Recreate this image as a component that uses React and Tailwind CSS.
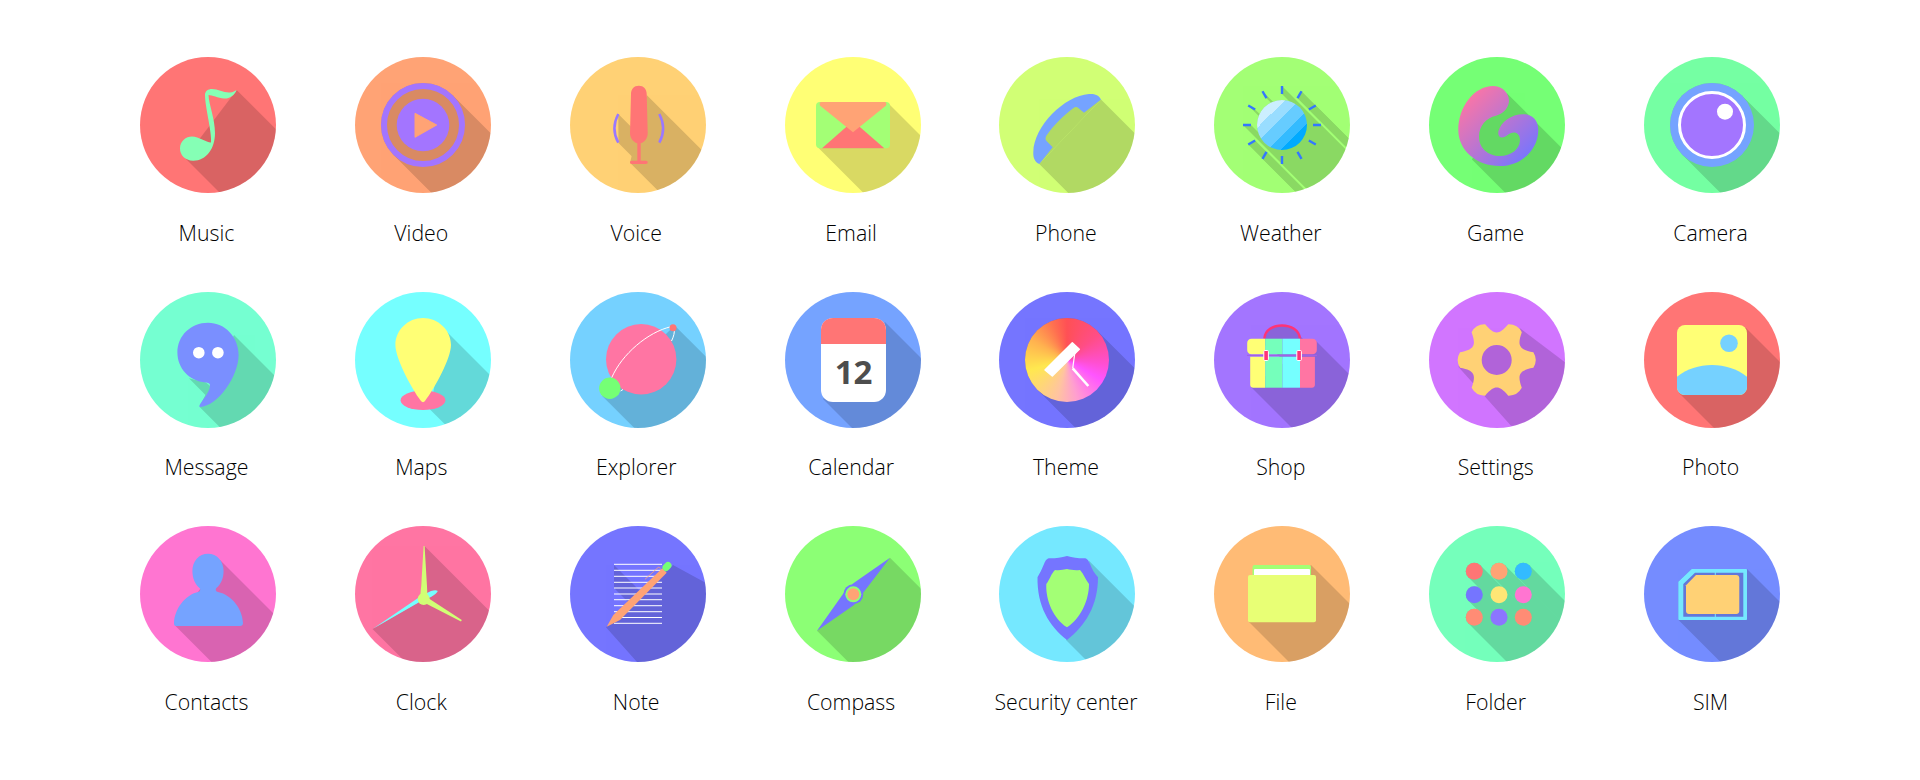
// Flat long-shadow app icon sheet
const Shade = ({ children }) => <g fill="#000" opacity="0.15">{children}</g>;

// long shadow running down-right from the edge between two points
const Band = ({ p }) => (
  <path d={`M${p[0]} ${p[1]}L${p[0] + 200} ${p[1] + 200}L${p[2] + 200} ${p[3] + 200}L${p[2]} ${p[3]}Z`} />
);

// same thing for a round shape, disc included
const RoundShade = ({ cx = 68, cy = 68, r }) => {
  const d = r * 0.7071;
  return (
    <>
      <circle cx={cx} cy={cy} r={r} />
      <Band p={[cx + d, cy - d, cx - d, cy + d]} />
    </>
  );
};

const Music = () => (
  <>
    <Shade><Band p={[96.7, 33, 45, 101]} /></Shade>
    <path fill="#85ffb5" d="M65 38C65 34 68 32 72 32C78 32 84 36 90 35.5C93 35.3 95 34 96.7 33C94 39 89 42 84 41.5C78 41 72 38 68.5 38C69 48 75 62 75 76C75 92 66 104 53 103.7C45 103.5 40 98 40 91.5C40 84 46 79.5 52 79.5C59 79.5 66 85.5 71 85.5C72 75 65 50 65 38Z" />
  </>
);

const Video = () => (
  <>
    <Shade><RoundShade r={42} /></Shade>
    <circle cx="68" cy="68" r="39" fill="none" stroke="#a375ff" strokeWidth="6" />
    <circle cx="68" cy="68" r="26.3" fill="#a375ff" />
    <path d="M60 56.3L81.7 68L60 80.3Z" fill="#ffa375" stroke="#ffa375" strokeLinejoin="round" />
  </>
);

const Voice = () => (
  <>
    <Shade>
      <Band p={[76.7, 38, 60, 105.7]} />
      <Band p={[48.3, 57, 48.5, 86]} />
    </Shade>
    <path fill="#ff7575" d="M61 37C61 32 64 28.7 68.8 28.7C73.5 28.7 76.7 32 76.7 37L77.7 76C77.7 81 75 85 70.7 86.3V103.7H76C77 103.7 77.7 104.5 77.7 105.3C77.7 106.2 77 107 76 107H61.7C60.7 107 60 106.2 60 105.3C60 104.5 60.7 103.7 61.7 103.7H67.3V86.3C63 85 60 81 60 76Z" />
    <path d="M48.3 57Q40.5 71.5 48.3 85.7M89.3 57Q97 71.5 89.3 85.7" fill="none" stroke="#9a78ff" strokeWidth="2.5" />
  </>
);

const Email = () => (
  <>
    <Shade><Band p={[103, 46, 33, 90.5]} /></Shade>
    <rect x="31" y="45" width="74" height="46.3" rx="4" fill="#a3ff75" />
    <path d="M37 91.3H99.3L68 64Z" fill="#ff7575" />
    <path d="M36.5 45H99.5C101.5 45 102 47.5 100.5 49L68 75.3L35.5 49C34 47.5 34.5 45 36.5 45Z" fill="#ffa375" />
  </>
);

const Phone = () => (
  <>
    <Shade>
      <Band p={[102, 42.5, 40.3, 107]} />
      <path d="M102 42.5L74 45L42 78L40.3 107Z" />
    </Shade>
    <path fill="#75a3ff" d="M102 42.5C100 38 95 36.5 90 37C65 39 35 69 34.3 95C34 101 36 105 40.3 107L53.7 90.3L47.5 84C46 82.5 46.5 80 47.5 78.5C54.5 68.5 64 59 74.5 51C76 49.8 78 49.8 79 50.8L85 55.7Z" />
  </>
);

const rayAngles = [0, 30, 60, 90, 120, 150, 180, 210, 240, 270, 300, 330];
const ray = (deg, r) => [68 + r * Math.sin((deg * Math.PI) / 180), 68 - r * Math.cos((deg * Math.PI) / 180)];

const Weather = () => (
  <>
    <defs>
      <linearGradient id="sunStripes" x1="0" y1="0" x2="1" y2="1">
        <stop offset="0.28" stopColor="#ccefff" />
        <stop offset="0.28" stopColor="#99ddff" />
        <stop offset="0.42" stopColor="#99ddff" />
        <stop offset="0.42" stopColor="#66ccff" />
        <stop offset="0.6" stopColor="#66ccff" />
        <stop offset="0.6" stopColor="#33bbff" />
        <stop offset="0.73" stopColor="#33bbff" />
        <stop offset="0.73" stopColor="#00aaff" />
      </linearGradient>
    </defs>
    <Shade>
      <RoundShade r={25} />
      {rayAngles.map((deg) => (
        <Band key={deg} p={[...ray(deg, 39), ...ray(deg, 31)]} />
      ))}
    </Shade>
    {rayAngles.map((deg) => {
      const [x1, y1] = ray(deg, 39);
      const [x2, y2] = ray(deg, 31);
      return <line key={deg} x1={x1} y1={y1} x2={x2} y2={y2} stroke="#3377ff" strokeWidth="2.4" />;
    })}
    <circle cx="68" cy="68" r="25" fill="url(#sunStripes)" />
  </>
);

const Game = () => (
  <>
    <defs>
      <linearGradient id="gameSwirl" x1="0.1" y1="0.1" x2="0.9" y2="0.9">
        <stop offset="0" stopColor="#ff75a3" />
        <stop offset="1" stopColor="#7575ff" />
      </linearGradient>
    </defs>
    <Shade>
      <Band p={[77.7, 36, 43, 102.5]} />
      <ellipse cx="70" cy="78" rx="22" ry="22" />
    </Shade>
    <path fill="url(#gameSwirl)" d="M64.3 29C70 29 75 32 77.7 36.3C80 40 80.5 44 79.5 47C78 52.5 74 56.5 67 58.7C57 61 50 69 50 79.7C50 91 59 99 71 99C82 99 91 92 91 83C91 78 88 75.5 85 75.5C80 75.5 77 80.5 73 80.5C70 80.5 68.5 77 69.5 74C72 65 82 57.3 94.3 57.3C103 57.3 109.3 63 109.3 73C109.3 93 92 109 71 109C47 109 29.3 93 29.3 73C29.3 50 45 29 64.3 29Z" />
  </>
);

const Camera = () => (
  <>
    <Shade><RoundShade r={42} /></Shade>
    <circle cx="68" cy="68" r="42" fill="#75a3ff" />
    <circle cx="68" cy="68" r="32.5" fill="#a375ff" stroke="#fff" strokeWidth="3" />
    <circle cx="81" cy="54.7" r="8" fill="#fff" />
  </>
);

const Message = () => (
  <>
    <Shade>
      <Band p={[94, 43, 59.6, 115]} />
      <path d="M48.9 86.3L68 105.5L70 94L66 90.5Z" />
    </Shade>
    <path fill="#7a8fff" d="M68 30.7C85 30.7 98.6 45 98.6 63C98.6 84 78 114 60 115C59 115 59.3 113 60.5 111.5C64 106 69.5 100 70 94C70.3 91 68 90.7 65.5 90.5C49 89 37.4 76 37.4 60.5C37.4 43.5 51 30.7 68 30.7Z" />
    <circle cx="58.8" cy="60.7" r="5.8" fill="#fff" />
    <circle cx="77.9" cy="60.7" r="5.8" fill="#fff" />
  </>
);

const Maps = () => (
  <>
    <Shade><Band p={[90, 38, 75, 117.4]} /></Shade>
    <ellipse cx="68" cy="108.3" rx="22.4" ry="9.7" fill="#ff75a3" />
    <path fill="#ffff75" d="M68 26C83 26 96 38 96 53C96 66 80 96 70 109C69 110.5 67 110.5 66 109C56 96 40.4 66 40.4 53C40.4 38 53 26 68 26Z" />
  </>
);

const Explorer = () => (
  <>
    <Shade><Band p={[104.7, 33.5, 32.2, 103.9]} /></Shade>
    <circle cx="71.2" cy="67.3" r="35.2" fill="#ff75a3" />
    <path d="M41.7 85.7C52 62 78 40 101 34.7M104 37C105 40 103.5 45 101.5 49M50.5 99L53 97.5" fill="none" stroke="#fff" strokeWidth="1" />
    <circle cx="39.8" cy="96.3" r="10.7" fill="#75ff75" />
    <circle cx="103" cy="35.7" r="3.5" fill="#ff7575" />
  </>
);

const Calendar = () => (
  <>
    <Shade><Band p={[100, 30, 38, 107]} /></Shade>
    <rect x="36" y="26" width="65" height="84" rx="12" fill="#fff" />
    <path d="M36 52V38C36 31 41 26 48 26H89C96 26 101 31 101 38V52Z" fill="#ff7575" />
    <text x="68.5" y="92" textAnchor="middle" fill="#4d4d4d" className="font-['Open_Sans',sans-serif] text-[33px] font-bold">12</text>
  </>
);

const Theme = () => (
  <>
    <Shade><RoundShade r={42} /></Shade>
    <foreignObject x="26" y="26" width="84" height="84">
      <div className="size-[84px] rounded-full bg-[conic-gradient(#ff5055,#ff4d85_50deg,#ff4fd0_95deg,#ff55ff_120deg,#ff9ed0_165deg,#ffc4a0_195deg,#ffe84f_255deg,#ffb24f_300deg,#ff6e50_340deg,#ff5055)]" />
    </foreignObject>
    <path d="M46 78L73.3 50.7L80.3 57.3L53.3 84Z" fill="#fff" stroke="#fff" strokeWidth="1.5" strokeLinejoin="round" />
    <path d="M76 59.7L73.7 76.3" fill="none" stroke="#fff" strokeWidth="1.2" />
    <line x1="73.7" y1="76.3" x2="89.3" y2="94" stroke="#fff" strokeWidth="2.6" />
  </>
);

const Shop = () => (
  <>
    <Shade>
      <Band p={[101, 48, 37, 95]} />
      <Band p={[80, 38, 51, 50]} />
      <ellipse cx="68" cy="48" rx="18" ry="15" />
    </Shade>
    <path d="M50.4 46.5C51 38 59 33.5 68 33.5C77 33.5 85 38 86 46.5" fill="none" stroke="#ff3377" strokeWidth="2.5" />
    <path d="M37.5 46.7H51.2V62.3H37.5C35 62.3 33.2 60.5 33.2 58V51C33.2 48.5 35 46.7 37.5 46.7Z" fill="#ffff75" />
    <path d="M36.2 64.7H51.2V95.7H39.2C37.5 95.7 36.2 94.4 36.2 92.7Z" fill="#ffff75" />
    <rect x="51.2" y="46.7" width="17.2" height="15.6" fill="#75ffbb" />
    <rect x="51.2" y="64.7" width="17.2" height="31" fill="#75ffbb" />
    <rect x="68.4" y="46.7" width="17.6" height="15.6" fill="#75ffff" />
    <rect x="68.4" y="64.7" width="17.6" height="31" fill="#75ffff" />
    <path d="M86 46.7H98.5C101 46.7 102.8 48.5 102.8 51V58C102.8 60.5 101 62.3 98.5 62.3H86Z" fill="#ff75a3" />
    <path d="M86 64.7H100.9V92.7C100.9 94.4 99.6 95.7 97.9 95.7H86Z" fill="#ff75a3" />
    <rect x="33" y="62.8" width="70" height="1.2" fill="#a35fe6" />
    <rect x="49.8" y="58.5" width="4.6" height="10" rx="1" fill="#ff3377" stroke="#fff" strokeWidth="1" />
    <rect x="82.8" y="58.5" width="4.6" height="10" rx="1" fill="#ff3377" stroke="#fff" strokeWidth="1" />
  </>
);

const polar = (deg, r) => {
  const a = (deg * Math.PI) / 180;
  return `${(67.7 + r * Math.cos(a)).toFixed(2)} ${(68 + r * Math.sin(a)).toFixed(2)}`;
};

// six rounded teeth plus the hole (evenodd)
const gearPath =
  `M${polar(-30, 27.5)}` +
  [0, 60, 120, 180, 240, 300]
    .map(
      (a) =>
        `C${polar(a - 24, 27.5)} ${polar(a - 18, 30)} ${polar(a - 12, 37.5)}` +
        `Q${polar(a, 41.5)} ${polar(a + 12, 37.5)}` +
        `C${polar(a + 18, 30)} ${polar(a + 24, 27.5)} ${polar(a + 30, 27.5)}`
    )
    .join('') +
  'ZM82.7 68A15 15 0 1 0 52.7 68A15 15 0 1 0 82.7 68Z';

const Settings = () => (
  <>
    <Shade>
      <path d="M91 36.3L136 70.3V136L82 133.7L29.3 74.7Z" />
      <circle cx="67.7" cy="68" r="15" />
    </Shade>
    <path d={gearPath} fillRule="evenodd" fill="#ffd175" />
  </>
);

const Photo = () => (
  <>
    <Shade><Band p={[101, 35, 35, 101]} /></Shade>
    <rect x="33" y="33" width="70" height="70" rx="8" fill="#ffff75" />
    <circle cx="85" cy="51.3" r="8.8" fill="#75d1ff" />
    <path d="M33 84.7C43 77 55 73 68 73C81 73 93 77 103 84.7V95C103 99.5 99.5 103 95 103H41C36.5 103 33 99.5 33 95Z" fill="#75d1ff" />
  </>
);

const Contacts = () => (
  <>
    <Shade><Band p={[80, 34, 35, 99.5]} /></Shade>
    <path fill="#75a3ff" d="M68 27.7C77 27.7 83.6 35 83.6 45C83.6 52 81 58 76.5 62C75 63.5 76 65.5 78 66C92 69 102.5 83 103 97C103 99 102 100 100 100H36C34.5 100 34 99 34 97C34.5 83 45 69 58 66C60 65.5 61 63.5 59.5 62C55 58 52.4 52 52.4 45C52.4 35 59 27.7 68 27.7Z" />
  </>
);

const Clock = () => (
  <>
    <Shade>
      <Band p={[69.5, 20, 65.5, 72]} />
      <Band p={[82.5, 65, 17.5, 103]} />
      <Band p={[106.8, 94, 72, 72]} />
    </Shade>
    <path fill="#75ffff" d="M17.5 103L66 70L76 65Q81 63.5 82.8 65Q82 67.5 76 71L68 74Z" />
    <path fill="#d1ff75" d="M68.6 20H69.6L72 60L72.5 72H65L66.2 60Z" />
    <path fill="#d1ff75" d="M70 70L106.8 94L106 95.5L66 75Z" />
    <circle cx="68.7" cy="73" r="6" fill="#d1ff75" />
  </>
);

const noteLines = [38.3, 44.3, 50.3, 56.3, 62, 68, 73.7, 79.7, 85.7, 91.5, 97.3];

const Note = () => (
  <>
    <Shade>
      <path d="M103 39L136 57V136H67L36 101.3Z" />
      <Band p={[44, 39, 44, 62]} />
    </Shade>
    {noteLines.map((y) => (
      <rect key={y} x="44" y={y - 0.5} width="48" height="1" fill="#fff" />
    ))}
    <path d="M36.7 100.7L43.3 89L92.3 42.3L96.7 46.7L50 94Z" fill="#ffa375" />
    <path d="M75 53.3L88.3 41.3L90.7 42.3" fill="none" stroke="#ffa375" strokeWidth="0.8" />
    <line x1="96" y1="41.5" x2="98" y2="39.5" stroke="#75ff75" strokeWidth="7" strokeLinecap="round" />
  </>
);

const Compass = () => (
  <>
    <Shade><Band p={[105, 31.7, 32, 104.7]} /></Shade>
    <path d="M105 31.7L78 67L69 79L32 104.7L58 68L68 57.5Z" fill="#7575ff" />
    <circle cx="68.3" cy="68.3" r="10" fill="#7575ff" />
    <circle cx="68.3" cy="68.3" r="8" fill="#8cff75" />
    <circle cx="68.3" cy="68.3" r="6" fill="#ffa375" />
  </>
);

const Security = () => (
  <>
    <Shade><Band p={[90, 34.7, 67, 114]} /></Shade>
    <path fill="#7575ff" d="M68 30C62 31.5 56 32.5 50 32.3C47 33 46 36 45 38C43 43 41 47 38.5 51.3C38 80 50 100 68 114C86 100 99 80 99 51.3C95 47 93 43 91 38C90 36 89 33 86 32.3C80 32.5 74 31.5 68 30Z" />
    <path fill="#a3ff75" d="M68 43C64 44 60 44.5 56 44C52 48 51 53 47.3 58C46.5 75 55 93 68 101.3C81 93 90 75 90 58C86 53 85 48 81 44C76 44.5 72 44 68 43Z" />
  </>
);

const File = () => (
  <>
    <Shade><Band p={[97, 39, 35, 96]} /></Shade>
    <rect x="38.5" y="39" width="58.5" height="20" rx="2" fill="#a3ff75" />
    <rect x="40" y="43" width="56" height="10" rx="1" fill="#fff" />
    <rect x="34" y="49" width="68" height="47.3" rx="2" fill="#e8ff75" />
  </>
);

const folderDots = [
  [45.3, 45.3, '#ff7575'],
  [70, 45.3, '#ffa375'],
  [94.3, 45.3, '#33bbff'],
  [45.3, 68.7, '#7575ff'],
  [70, 68.7, '#ffe675'],
  [94.3, 68.7, '#ff75d1'],
  [45.3, 91.3, '#ff8c75'],
  [70, 91.3, '#8c75ff'],
  [94.3, 91.3, '#ff8c75'],
];

const Folder = () => (
  <>
    <Shade>
      {folderDots.map(([cx, cy]) => (
        <RoundShade key={`${cx}-${cy}`} cx={cx} cy={cy} r={8.5} />
      ))}
    </Shade>
    {folderDots.map(([cx, cy, color]) => (
      <circle key={`${cx}-${cy}`} cx={cx} cy={cy} r="8.5" fill={color} />
    ))}
  </>
);

const Sim = () => (
  <>
    <Shade>
      <Band p={[103, 43, 34.5, 94]} />
      <path d="M47.7 43H103V94H34.3V55.7Z" />
    </Shade>
    <path fillRule="evenodd" fill="#75e8ff" d="M47.7 43H102C102.6 43 103 43.4 103 44V93C103 93.6 102.6 94 102 94H35.3C34.7 94 34.3 93.6 34.3 93V55.7ZM51 46.7L39.3 58V90.7H99.3V46.7Z" />
    <rect x="70.8" y="46" width="1" height="3" fill="#75e8ff" />
    <rect x="70.8" y="88" width="1" height="3" fill="#75e8ff" />
    <path d="M52 49H92.3C94 49 95.3 50.3 95.3 52V85C95.3 86.7 94 88 92.3 88H45C43.3 88 42 86.7 42 85V59.3Z" fill="#ffd175" />
  </>
);

const apps = [
  { label: 'Music', bg: 'bg-[#ff7575]', Icon: Music },
  { label: 'Video', bg: 'bg-[#ffa375]', Icon: Video },
  { label: 'Voice', bg: 'bg-[#ffd175]', Icon: Voice },
  { label: 'Email', bg: 'bg-[#ffff75]', Icon: Email },
  { label: 'Phone', bg: 'bg-[#d1ff75]', Icon: Phone },
  { label: 'Weather', bg: 'bg-[#a3ff75]', Icon: Weather },
  { label: 'Game', bg: 'bg-[#75ff75]', Icon: Game },
  { label: 'Camera', bg: 'bg-[#75ffa3]', Icon: Camera },
  { label: 'Message', bg: 'bg-[#75ffd1]', Icon: Message },
  { label: 'Maps', bg: 'bg-[#75ffff]', Icon: Maps },
  { label: 'Explorer', bg: 'bg-[#75d1ff]', Icon: Explorer },
  { label: 'Calendar', bg: 'bg-[#75a3ff]', Icon: Calendar },
  { label: 'Theme', bg: 'bg-[#7575ff]', Icon: Theme },
  { label: 'Shop', bg: 'bg-[#a375ff]', Icon: Shop },
  { label: 'Settings', bg: 'bg-[#d175ff]', Icon: Settings },
  { label: 'Photo', bg: 'bg-[#ff7575]', Icon: Photo },
  { label: 'Contacts', bg: 'bg-[#ff75d1]', Icon: Contacts },
  { label: 'Clock', bg: 'bg-[#ff75a3]', Icon: Clock },
  { label: 'Note', bg: 'bg-[#7575ff]', Icon: Note },
  { label: 'Compass', bg: 'bg-[#8cff75]', Icon: Compass },
  { label: 'Security center', bg: 'bg-[#75e8ff]', Icon: Security },
  { label: 'File', bg: 'bg-[#ffbb75]', Icon: File },
  { label: 'Folder', bg: 'bg-[#75ffbb]', Icon: Folder },
  { label: 'SIM', bg: 'bg-[#758cff]', Icon: Sim },
];

const App = () => (
  <div className="min-h-[780px] bg-white pl-[100.5px] pt-[57px]">
    <div className="grid w-[1719px] grid-cols-8 gap-y-[45px]">
      {apps.map(({ label, bg, Icon }) => (
        <div key={label} className="flex flex-col items-center">
          <div className={`size-[136px] overflow-hidden rounded-full ${bg}`}>
            <svg viewBox="0 0 136 136" className="size-[136px]">
              <Icon />
            </svg>
          </div>
          <p className="mt-[25.5px] pr-[3px] font-['Open_Sans',sans-serif] text-[21.3px] font-light leading-[28px] text-black">
            {label}
          </p>
        </div>
      ))}
    </div>
  </div>
);

export default App;
